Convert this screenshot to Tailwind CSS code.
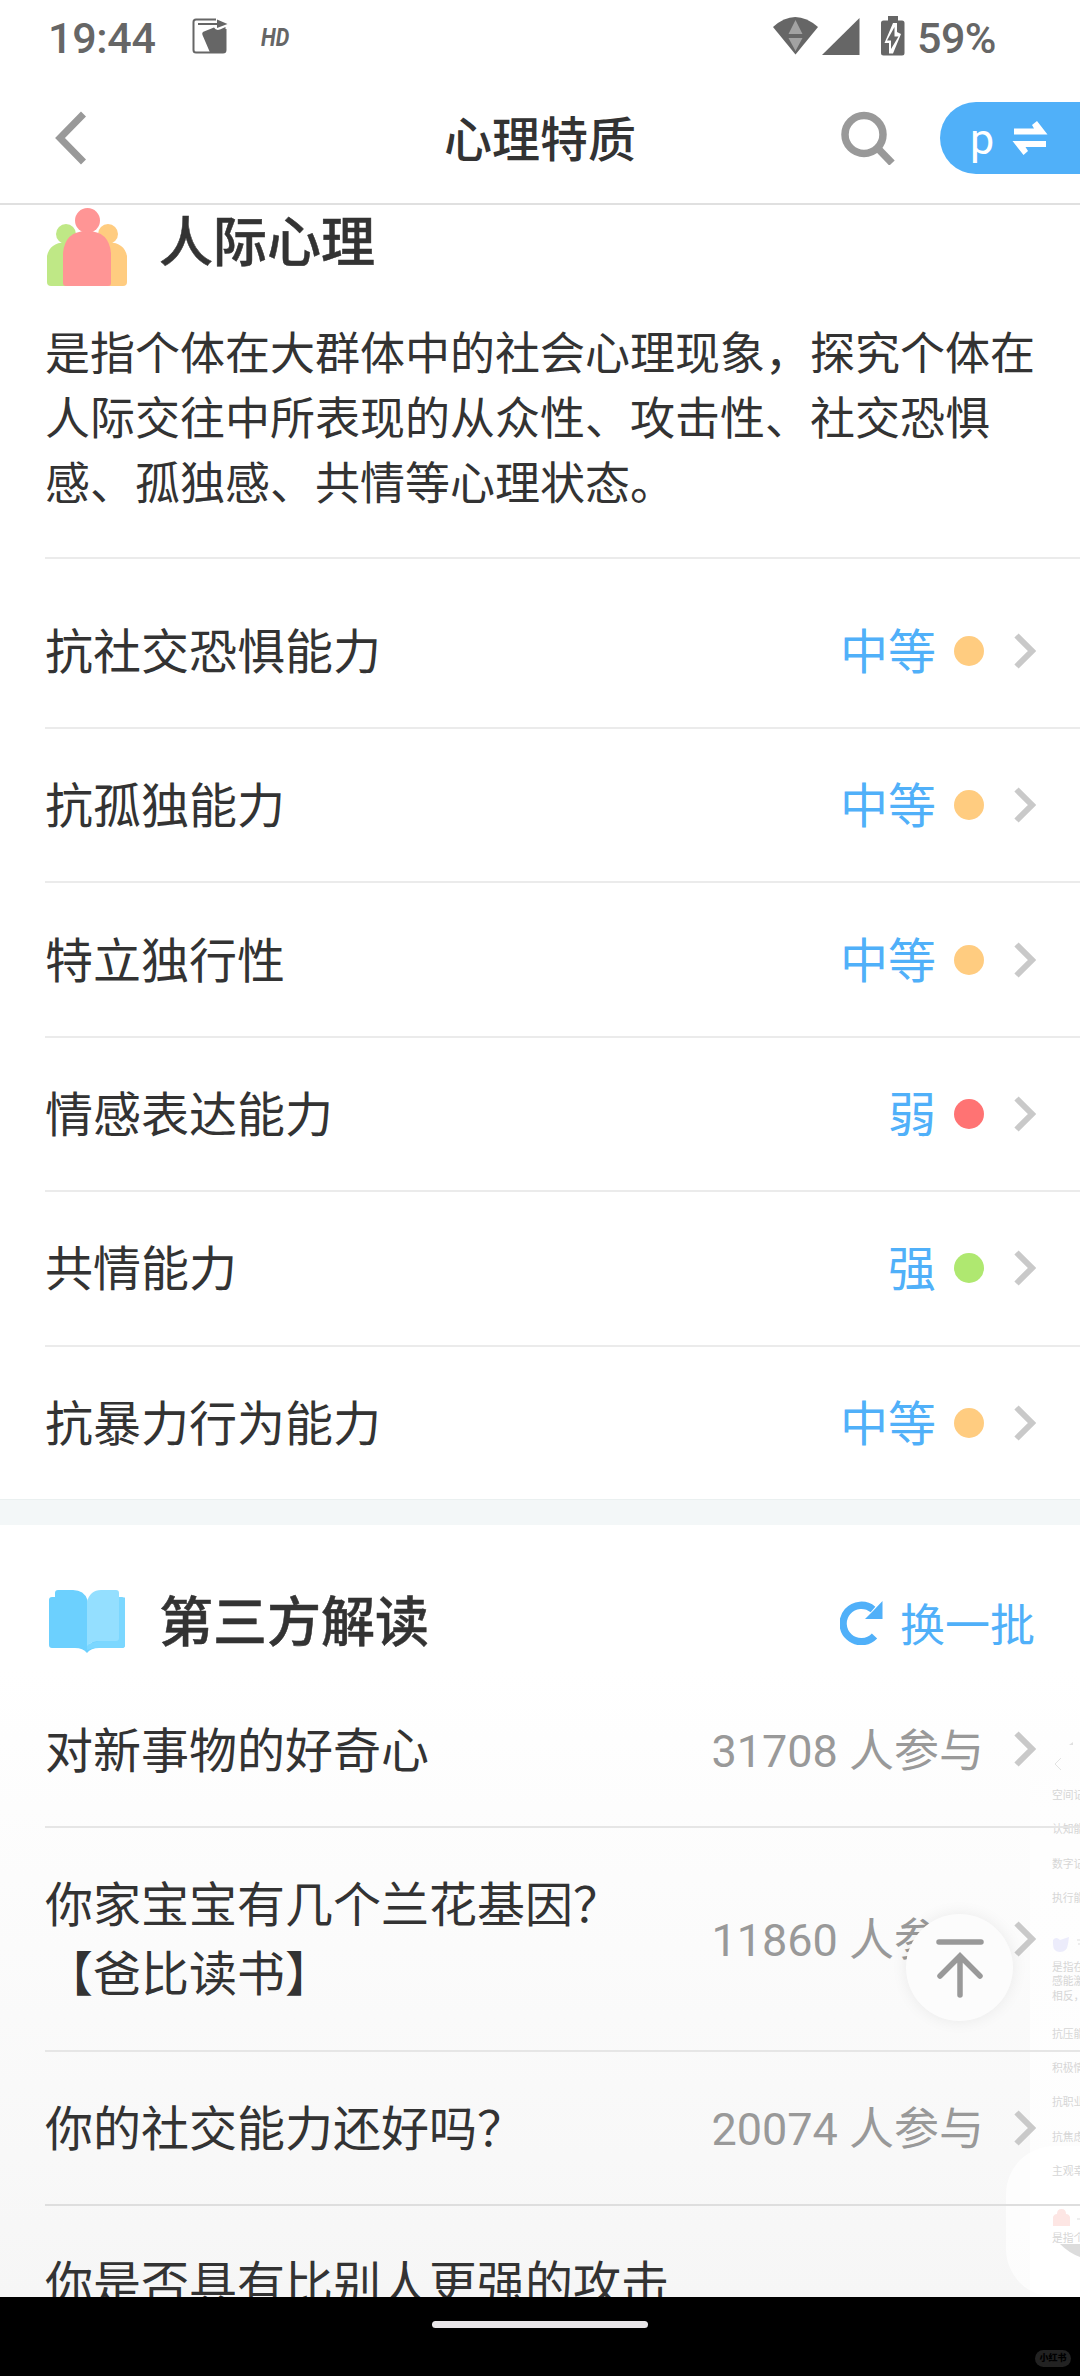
<!DOCTYPE html>
<html lang="zh-CN">
<head>
<meta charset="utf-8">
<title>心理特质</title>
<script src="https://cdn.jsdelivr.net/npm/@tailwindcss/browser@4"></script>
</head>
<body class="bg-black">
<svg class="hidden">
  <symbol id="chev" viewBox="0 0 22 36"><path d="M2.5 2.5 18 18 2.5 33.5" fill="none" stroke="#c9c9c9" stroke-width="6"/></symbol>
</svg>
<div class="relative flex h-[2376px] w-[1080px] flex-col overflow-hidden bg-white font-['Roboto','Noto_Sans_CJK_SC',sans-serif] text-[#333]">

  <!-- status bar -->
  <div class="flex h-[74px] shrink-0 items-center pr-[84px] pl-[48px] text-[#666]">
    <span class="w-[144px] pt-[1px] text-[43px] leading-[74px] font-medium tracking-[-0.3px]">19:44</span>
    <svg class="-mt-[2px] h-[36px] w-[36px]" viewBox="0 0 36 36"><path d="M24 1.500H4Q1.500 1.500 1.500 4V32Q1.500 34.500 4 34.500H31Q33.500 34.500 33.500 32V11" fill="none" stroke="#666" stroke-width="2"/><path d="M6 5H25V1.500L35.500 6 25 10V7H6z" fill="#666"/><path d="M12 13.500 22 9.500Q24 13 28 11.500L33.500 9V32Q33.500 34.500 31 34.500H18L10.500 17Q9.500 14.500 12 13.500z" fill="#666"/></svg>
    <span class="ml-[33px] origin-left scale-x-[.86] text-[25px] leading-none font-bold italic">HD</span>
    <div class="ml-auto flex items-center">
      <svg class="-mt-[2px] h-[40px] w-[134px]" viewBox="774 16 134 40"><path d="M774 27Q796 7 819 27L796.500 54.500z" fill="#666"/><path d="M796.500 20 803.500 34H789.500zM789.500 38H803.500L796.500 51z" fill="#a2a2a2"/><path d="M823 55 860.500 18V55z" fill="#666"/><path d="M889 16H899V20.500H903Q905.500 20.500 905.500 23V53Q905.500 55.500 903 55.500H884.500Q882 55.500 882 53V23Q882 20.500 884.500 20.500H889z" fill="#666"/><path d="M894 23H898V32L902 34 894 53.500H890V43H885.500z" fill="#fff"/><path d="M895.500 27V36.500H899.500L892 49V40.500H888z" fill="#666"/></svg>
      <span class="ml-[10px] pt-[1px] text-[43px] leading-[74px] font-medium tracking-[-0.5px]">59%</span>
    </div>
  </div>

  <!-- title bar -->
  <header class="relative flex h-[131px] shrink-0 items-center justify-between border-b-2 border-[#e0e0e0] pb-[2px] pl-[54px]">
    <svg class="h-[54px] w-[34px]" viewBox="0 0 34 54"><path d="M29.500 3 6 27 29.500 51" fill="none" stroke="#999" stroke-width="7"/></svg>
    <h1 class="absolute inset-x-0 top-0 pt-[1px] text-center text-[48px] leading-[131px] font-medium">心理特质</h1>
    <div class="flex items-center gap-[45px]">
      <svg class="h-[54px] w-[54px]" viewBox="0 0 54 54"><circle cx="23" cy="23.500" r="19" fill="none" stroke="#999" stroke-width="7.500"/><path d="M36 36.500 51 52" stroke="#999" stroke-width="7.500"/></svg>
      <div class="flex h-[72px] w-[140px] items-center gap-[18px] rounded-l-full bg-[#50b0f9] pl-[30px] text-white">
        <span class="pt-[3px] text-[43px] leading-[72px]">p</span>
        <svg class="h-[34px] w-[36px]" viewBox="0 0 36 34"><path d="M2 7.500H22L20 4 25 0 35.500 13.500H2zM34 26H13.500L16 30 11.500 34 .500 20H34z" fill="#fff"/></svg>
      </div>
    </div>
  </header>

  <main class="relative flex h-[2092px] shrink-0 flex-col overflow-hidden bg-linear-to-b from-white from-70% to-[#f6f6f6]">

    <!-- faint preview of another screen behind the right edge of the list -->
    <div class="absolute top-[1525px] left-[1030px] h-[567px] w-[50px] bg-linear-to-b from-white/0 via-white/70 via-20% to-white/80"></div>
    <div class="absolute top-[1941px] left-[1006px] h-[151px] w-[74px] rounded-l-[48px] bg-white/70"></div>
    <div class="absolute top-[1533px] left-[1052px] h-[520px] w-[28px] overflow-hidden text-[10.800px] leading-[14px] whitespace-nowrap text-[#d6d6d6]">
      <svg class="h-[51px] w-[28px]" viewBox="0 0 28 51"><path d="M9 20 3 26 9 32" fill="none" stroke="#e2e2e2"/><path d="M17 7 21 4V7z" fill="#e0e0e0"/></svg>
      <div class="flex flex-col gap-[20.300px]"><span>空间记</span><span>认知能</span><span>数字记</span><span>执行能</span></div>
      <svg class="mt-[30px] h-[17px] w-[28px]" viewBox="0 0 28 17"><path d="M1 4Q4 0 8 4L14 2 17 1 16 8Q15 16 8 16T1 8z" fill="#ececfb"/><path d="M25 4H28M26 8H28" stroke="#ddd"/></svg>
      <div class="mt-[8px] leading-[14.600px]">是指在<br>感能激<br>相反，</div>
      <div class="mt-[23px] flex flex-col gap-[20.300px]"><span>抗压能</span><span>积极情</span><span>抗职业</span><span>抗焦虑</span><span>主观幸</span></div>
      <svg class="mt-[28px] h-[20px] w-[28px]" viewBox="0 0 28 20"><path d="M1 19V10Q2 7 5 7 5 2 9.500 2T14 7Q17 7 18 10V19z" fill="#fde6e4"/><path d="M25 12H28" stroke="#ddd"/></svg>
      <div class="mt-[5px]">是指个</div>
    </div>
    <svg class="absolute top-[2039px] left-[1060px] h-[14px] w-[20px]" viewBox="0 0 20 14"><path d="M0 0H20V13Q9 9 0 0z" fill="#dcdcdc"/></svg>

    <section class="relative flex flex-col">
      <div class="flex h-[84px] items-start gap-[32px] pt-[3px] pl-[47px]">
        <svg class="h-[78px] w-[80px]" viewBox="0 0 80 78"><g fill="#bfe886"><circle cx="19" cy="26" r="10"/><path d="M0 48Q3 34 19 34.500V78H4Q0 78 0 74z"/></g><g fill="#ffcc80"><circle cx="61" cy="26" r="10"/><path d="M80 48Q77 34 61 34.500V78H76Q80 78 80 74z"/></g><circle cx="40.500" cy="12.500" r="14" fill="#fff"/><path d="M16 75V45Q18 23 40 23T64 45V75Q64 78 61 78H19Q16 78 16 75z" fill="#ff9595"/><circle cx="40.500" cy="12.500" r="12.500" fill="#ff9595"/></svg>
        <h2 class="pt-[2px] text-[54px] leading-[68px] font-medium [-webkit-text-stroke:0.5px]">人际心理</h2>
      </div>
      <p class="mt-[33px] ml-[45px] w-[1000px] text-[45px] leading-[65px]">是指个体在大群体中的社会心理现象，探究个体在<br>人际交往中所表现的从众性、攻击性、社交恐惧<br>感、孤独感、共情等心理状态。</p>
      <ul class="mt-[40px] ml-[45px] flex flex-col text-[48px] leading-[72px]">
        <li class="flex h-[170px] items-center border-t-2 border-[#ebebeb] pt-[15px] pr-[44px]"><span class="flex-1 pt-[4px]">抗社交恐惧能力</span><span class="pt-[4px] text-[#50b0f9]">中等</span><i class="mr-[30px] ml-[18px] size-[30px] rounded-full bg-[#ffcc80]"></i><svg class="h-[36px] w-[22px]"><use href="#chev"/></svg></li>
        <li class="flex h-[154.400px] items-center border-t-2 border-[#ebebeb] pr-[44px]"><span class="flex-1 pt-[4px]">抗孤独能力</span><span class="pt-[4px] text-[#50b0f9]">中等</span><i class="mr-[30px] ml-[18px] size-[30px] rounded-full bg-[#ffcc80]"></i><svg class="h-[36px] w-[22px]"><use href="#chev"/></svg></li>
        <li class="flex h-[154.400px] items-center border-t-2 border-[#ebebeb] pr-[44px]"><span class="flex-1 pt-[4px]">特立独行性</span><span class="pt-[4px] text-[#50b0f9]">中等</span><i class="mr-[30px] ml-[18px] size-[30px] rounded-full bg-[#ffcc80]"></i><svg class="h-[36px] w-[22px]"><use href="#chev"/></svg></li>
        <li class="flex h-[154.400px] items-center border-t-2 border-[#ebebeb] pr-[44px]"><span class="flex-1 pt-[4px]">情感表达能力</span><span class="pt-[4px] text-[#50b0f9]">弱</span><i class="mr-[30px] ml-[18px] size-[30px] rounded-full bg-[#ff7373]"></i><svg class="h-[36px] w-[22px]"><use href="#chev"/></svg></li>
        <li class="flex h-[154.400px] items-center border-t-2 border-[#ebebeb] pr-[44px]"><span class="flex-1 pt-[4px]">共情能力</span><span class="pt-[4px] text-[#50b0f9]">强</span><i class="mr-[30px] ml-[18px] size-[30px] rounded-full bg-[#afe870]"></i><svg class="h-[36px] w-[22px]"><use href="#chev"/></svg></li>
        <li class="flex h-[154.400px] items-center border-t-2 border-[#ebebeb] pr-[44px]"><span class="flex-1 pt-[4px]">抗暴力行为能力</span><span class="pt-[4px] text-[#50b0f9]">中等</span><i class="mr-[30px] ml-[18px] size-[30px] rounded-full bg-[#ffcc80]"></i><svg class="h-[36px] w-[22px]"><use href="#chev"/></svg></li>
      </ul>
    </section>

    <div class="h-[26px] shrink-0 border-t border-[#eaf0f0] bg-[#f3f7f8]"></div>

    <section class="relative flex flex-col">
      <div class="flex h-[148px] items-center pt-[46px] pr-[45px] pl-[48px]">
        <svg class="-mt-[2px] h-[66px] w-[78px]" viewBox="0 0 78 66"><path d="M1 12Q1 9 4 9H7V5Q7 2 10 2H25Q36 2 39.500 12V60L77 9V57Q77 60 74 60H51Q43 60 39 65 35 60 27 60H4Q1 60 1 57z" fill="#6cd0fe"/><path d="M66 9H74Q77 9 77 12V57Q77 60 74 60H46L39 62V56L66 50z" fill="#7bd7ff"/><path d="M39 14Q42 2 53 2H68Q71 2 71 5V50Q71 53 68 53H53Q43 53 39 58z" fill="#94dfff"/></svg>
        <h2 class="ml-[33px] flex-1 pt-[4px] text-[54px] leading-[72px] font-medium [-webkit-text-stroke:0.5px]">第三方解读</h2>
        <svg class="mt-[2px] h-[44px] w-[43px]" viewBox="0 0 43 44"><path d="M34.500 35A18.200 18.200 0 1 1 33 8.500" fill="none" stroke="#50b0f9" stroke-width="7.300"/><path d="M42.500 0V18H25L33 10z" fill="#50b0f9"/></svg>
        <span class="ml-[17px] pt-[10px] text-[45px] leading-[66px] text-[#50b0f9]">换一批</span>
      </div>
      <ul class="ml-[45px] flex flex-col text-[48px] leading-[69px]">
        <li class="flex h-[153px] items-center pr-[44px]"><span class="flex-1 pt-[4px]">对新事物的好奇心</span><span class="mr-[30px] pt-[4px] text-[45px] text-[#999]">31708 人参与</span><svg class="h-[36px] w-[22px]"><use href="#chev"/></svg></li>
        <li class="flex h-[224px] items-center border-t-2 border-[#e6e6e6] pr-[44px]"><span class="flex-1 pt-[3px]">你家宝宝有几个兰花基因？<br>【爸比读书】</span><span class="mr-[30px] pt-[4px] text-[45px] text-[#999]">11860 人参与</span><svg class="h-[36px] w-[22px]"><use href="#chev"/></svg></li>
        <li class="flex h-[154px] items-center border-t-2 border-[#e6e6e6] pr-[44px]"><span class="flex-1 pt-[4px]">你的社交能力还好吗？</span><span class="mr-[30px] pt-[4px] text-[45px] text-[#999]">20074 人参与</span><svg class="h-[36px] w-[22px]"><use href="#chev"/></svg></li>
        <li class="flex h-[224px] items-start border-t-2 border-[#dedede] pt-[44px]"><span>你是否具有比别人更强的攻击</span></li>
      </ul>
    </section>
  </main>

  <!-- system navigation -->
  <footer class="relative flex flex-1 justify-center bg-black pt-[24px]">
    <div class="h-[7px] w-[216px] rounded-full bg-[#e8e6e8]"></div>
    <span class="absolute top-[53px] right-[9px] h-[17px] w-[36px] rounded-full bg-[#222] text-center text-[9px] leading-[17px] font-black text-black">小红书</span>
  </footer>

  <!-- back-to-top button -->
  <div class="absolute top-[1914px] left-[906px] flex size-[107px] items-center justify-center rounded-full bg-[#fcfcfc] shadow-[0_0_16px_rgba(0,0,0,0.07)]">
    <svg class="h-[60px] w-[50px]" viewBox="0 0 50 60"><path d="M4 4H46M25 57V18M5 38 25 18 45 38" fill="none" stroke="#999" stroke-width="5.500" stroke-linecap="round"/></svg>
  </div>
</div>
</body>
</html>
